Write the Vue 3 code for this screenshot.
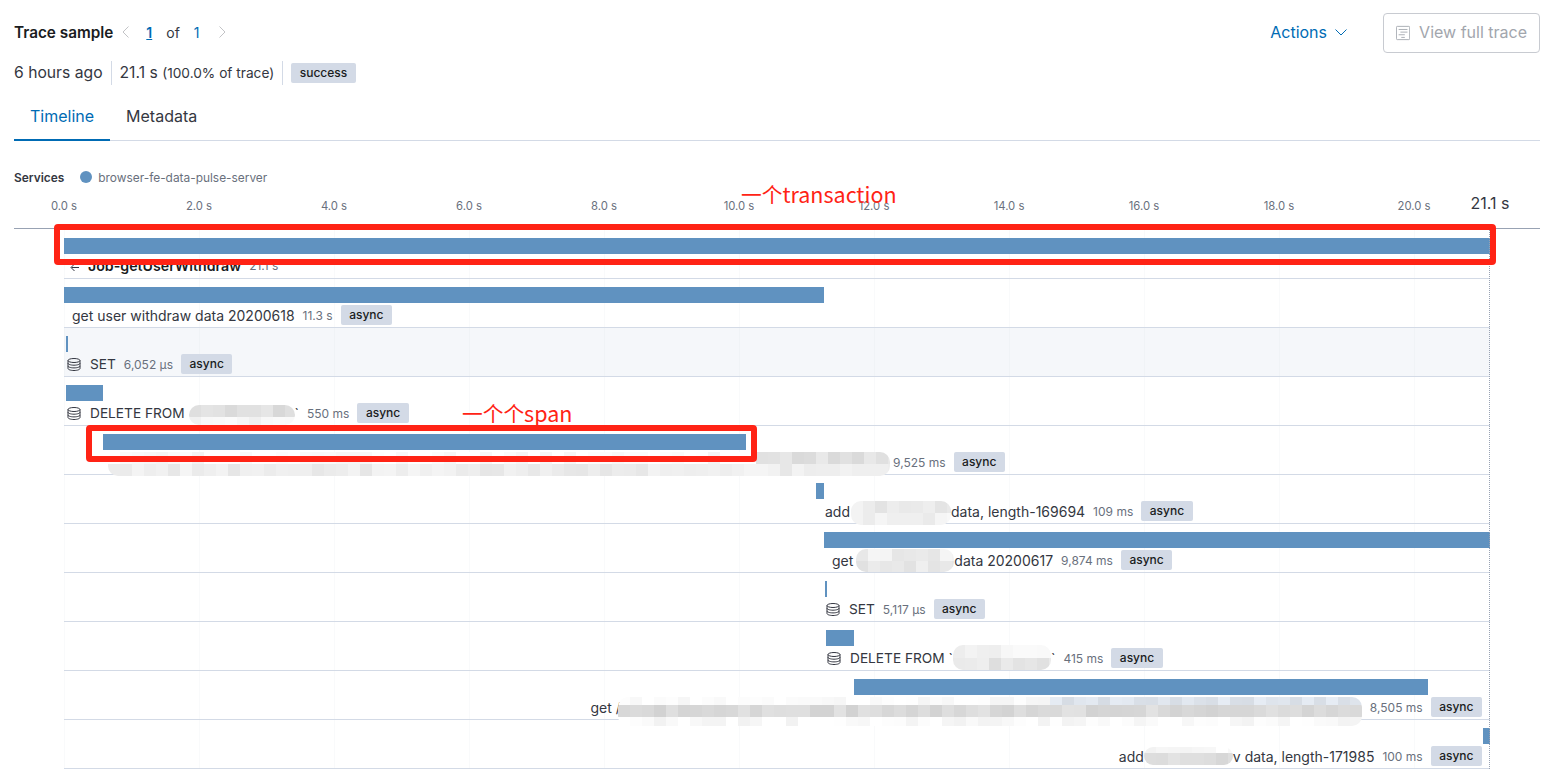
<script setup>
const ticks = [0, 2, 4, 6, 8, 10, 12, 14, 16, 18, 20]

// start/len are in px of the 1426px wide chart, turned into percent below
const rows = [
  { root: true, start: 0, len: 1426, at: 6, parts: [{ text: 'Job-getUserWithdraw' }], dur: '21.1 s' },
  { start: 0, len: 760, at: 8, parts: [{ text: 'get user withdraw data 20200618' }], dur: '11.3 s', tag: 'async' },
  { start: 2, len: 2, at: 3, db: true, hover: true, parts: [{ text: 'SET' }], dur: '6,052 μs', tag: 'async' },
  {
    start: 2, len: 37, at: 3, db: true,
    parts: [
      { text: 'DELETE FROM ' },
      { top: 2, w: 106, rows: [{ h: 12, c: 222 }, { h: 8, c: 248 }] },
      { text: '`' }
    ],
    dur: '550 ms', tag: 'async'
  },
  {
    start: 39, len: 643, at: 44,
    parts: [{ top: 0, w: 782, after: -5, rows: [{ h: 12, c: 251, from: 54, alt: 226 }, { h: 12, c: 238 }] }],
    dur: '9,525 ms', tag: 'async'
  },
  {
    start: 752, len: 8, at: 761,
    parts: [
      { text: 'add' },
      { top: 0, w: 100, gap: 1, rows: [{ h: 12, c: 235 }, { h: 12, c: 241 }] },
      { text: 'data, length-169694' }
    ],
    dur: '109 ms', tag: 'async'
  },
  {
    start: 760, len: 666, at: 768,
    parts: [
      { text: 'get' },
      { top: -1, w: 98, gap: 3, rows: [{ h: 12, c: 238 }, { h: 11, c: 232 }] },
      { text: 'data 20200617' }
    ],
    dur: '9,874 ms', tag: 'async'
  },
  { start: 761, len: 2, at: 762, db: true, parts: [{ text: 'SET' }], dur: '5,117 μs', tag: 'async' },
  {
    start: 762, len: 28, at: 763, db: true,
    parts: [
      { text: 'DELETE FROM `' },
      { top: -3, w: 98, rows: [{ h: 13, c: 244 }, { h: 12, c: 230 }] },
      { text: '`' }
    ],
    dur: '415 ms', tag: 'async'
  },
  {
    start: 790, len: 574, right: true,
    parts: [
      { text: 'get /' },
      { top: 0, w: 744, gap: -3, rows: [{ h: 8, c: 253, from: 36, alt: 222, blue: true }, { h: 12, c: 218 }, { h: 9, c: 250 }] }
    ],
    dur: '8,505 ms', tag: 'async'
  },
  {
    start: 1419, len: 7, right: true,
    parts: [
      { text: 'add' },
      { top: 1, w: 89, rows: [{ h: 6, c: 250 }, { h: 12, c: 223 }] },
      { text: 'v data, length-171985' }
    ],
    dur: '100 ms', tag: 'async'
  }
]

const pct = (px) => `${(px / 1426) * 100}%`

// fake the pixelated redaction blocks, seeded so each run looks the same
let seed = 7
const jitter = () => {
  seed = (seed * 16807) % 2147483647
  return (seed % 17) - 8
}

const cellColor = (band, col) => {
  const useAlt = band.from !== undefined && col >= band.from
  const base = useAlt ? band.alt : band.c
  const v = Math.min(255, base + jitter())
  if (useAlt && band.blue) return `rgb(${v}, ${v + 6}, ${v + 14})`
  return `rgb(${v}, ${v}, ${v})`
}

const cells = (part) =>
  part.rows.map((band) => ({
    h: band.h,
    colors: Array.from({ length: Math.ceil(part.w / 12) }, (_, col) => cellColor(band, col))
  }))

const mosaics = new Map()
rows.forEach((row) => {
  row.parts.forEach((part) => {
    if (part.rows) mosaics.set(part, cells(part))
  })
})
</script>

<template>
  <div class="page">
    <div class="head">
      <div class="head-left">
        <h5 class="title">Trace sample</h5>
        <svg class="pager-arrow" width="16" height="16" viewBox="0 0 16 16">
          <path d="M10.500 2.500 5 8l5.500 5.500" fill="none" stroke="#c2c3c6" stroke-width="1" />
        </svg>
        <a class="page-current">1</a>
        <span class="page-of">of</span>
        <a class="page-total">1</a>
        <svg class="pager-arrow next" width="16" height="16" viewBox="0 0 16 16">
          <path d="M5.500 2.500 11 8l-5.500 5.500" fill="none" stroke="#c2c3c6" stroke-width="1" />
        </svg>
      </div>
      <div class="head-right">
        <a class="actions">
          Actions
          <svg width="16" height="16" viewBox="0 0 16 16">
            <path d="M2.500 5.500 8 11l5.500-5.500" fill="none" stroke="#006bb4" stroke-width="1" />
          </svg>
        </a>
        <button class="full-trace" disabled>
          <svg width="16" height="16" viewBox="0 0 16 16" fill="none" stroke="#a2a6ad" stroke-width="1">
            <rect x="0.5" y="0.5" width="15" height="15" rx="1" />
            <path d="M3 4h10M5 7h8M3 10h7M6 13h4" />
          </svg>
          <span>View full trace</span>
        </button>
      </div>
    </div>

    <div class="summary">
      <span class="summary-item">6 hours ago</span>
      <span class="summary-item">21.1 s <small>(100.0% of trace)</small></span>
      <span class="badge success">success</span>
    </div>

    <div class="tabs">
      <div class="tab active">Timeline</div>
      <div class="tab">Metadata</div>
    </div>

    <div class="services">
      <b>Services</b>
      <i class="dot"></i>
      <span>browser-fe-data-pulse-server</span>
    </div>

    <div class="timeline">
      <div class="axis">
        <div class="axis-inner">
          <span v-for="t in ticks" :key="t" class="tick" :style="{ left: pct(t * 67.5) }">{{ t.toFixed(1) }} s</span>
          <span class="tick-end">21.1 s</span>
        </div>
      </div>

      <div class="rows">
        <i v-for="t in ticks" :key="t" class="grid-line" :style="{ left: pct(t * 67.5) }"></i>

        <div
          v-for="(row, i) in rows"
          :key="i"
          class="row"
          :class="{ hover: row.hover, first: row.root }"
        >
          <div class="bar" :style="{ marginLeft: pct(row.start), width: pct(row.len) }"></div>
          <div
            class="label"
            :class="{ right: row.right, root: row.root, 'has-db': row.db }"
            :style="row.right ? null : { paddingLeft: row.at + 'px' }"
          >
            <svg v-if="row.root" class="back" width="10" height="9" viewBox="0 0 10 9">
              <path d="M9 4.500H1.500M4.500 1 1 4.500 4.500 8" fill="none" stroke="#343741" stroke-width="1" />
            </svg>
            <svg v-if="row.db" class="db" width="14" height="13" viewBox="0 0 14 13" fill="none" stroke="#343741" stroke-width="1">
              <ellipse cx="7" cy="2.500" rx="6" ry="2" />
              <path d="M1 2.500v8c0 1.100 2.700 2 6 2s6-.9 6-2v-8M1 5.200c0 1.100 2.700 2 6 2s6-.9 6-2M1 7.900c0 1.100 2.700 2 6 2s6-.9 6-2" />
            </svg>
            <template v-for="(part, j) in row.parts" :key="j">
              <span v-if="part.text" class="name">{{ part.text }}</span>
              <div
                v-else
                class="mosaic"
                :style="{
                  width: part.w + 'px',
                  marginTop: part.top + 'px',
                  marginLeft: (part.gap || 0) + 'px',
                  marginRight: (part.after || 0) + 'px'
                }"
              >
                <div v-for="(band, k) in mosaics.get(part)" :key="k" class="mosaic-row" :style="{ height: band.h + 'px' }">
                  <i v-for="(color, c) in band.colors" :key="c" :style="{ background: color }"></i>
                </div>
              </div>
            </template>
            <span class="dur">{{ row.dur }}</span>
            <span v-if="row.tag" class="badge">{{ row.tag }}</span>
          </div>
        </div>

        <i class="end-line"></i>
      </div>

      <!-- red notes someone drew on top of the screenshot -->
      <div class="mark mark-root"></div>
      <div class="mark mark-span"></div>
      <span class="note note-root"><small>一个</small>transaction</span>
      <span class="note note-span"><small>一个个</small>span</span>
    </div>
  </div>
</template>

<style>
html,
body {
  margin: 0;
  background: #fff;
}
</style>

<style scoped>
.page {
  height: 783px;
  box-sizing: border-box;
  padding: 13px 11px 0 14px;
  overflow: hidden;
  font-family: Inter, "Noto Sans", sans-serif;
  color: #343741;
  position: relative;
}

.head {
  display: flex;
  justify-content: space-between;
  align-items: center;
  height: 40px;
}

.head-left,
.head-right {
  display: flex;
  align-items: center;
}

.head-left {
  padding-bottom: 2px;
}

.title {
  margin: 0;
  font-size: 15.3px;
  font-weight: 600;
  color: #1a1c21;
}

.pager-arrow {
  margin-left: 5px;
}

.pager-arrow.next {
  margin-left: 14px;
}

.page-current {
  margin-left: 12px;
  font-size: 14px;
  font-weight: 600;
  color: #006bb4;
  text-decoration: underline;
}

.page-of {
  margin-left: 14px;
  font-size: 14px;
  color: #343741;
}

.page-total {
  margin-left: 14px;
  font-size: 14px;
  color: #006bb4;
}

.actions {
  display: flex;
  align-items: center;
  gap: 6px;
  margin-right: 34px;
  padding-bottom: 2px;
  font-size: 16px;
  color: #006bb4;
}

.full-trace {
  display: flex;
  align-items: center;
  gap: 9px;
  width: 157px;
  height: 40px;
  padding: 0 12px;
  box-sizing: border-box;
  background: #fff;
  border: 1px solid #c8cbd1;
  border-radius: 4px;
  font-family: inherit;
  font-size: 16px;
  color: #a2a6ad;
  white-space: nowrap;
}

.full-trace span {
  margin-top: -2px;
}

.summary {
  display: flex;
  align-items: center;
  height: 24px;
  margin-top: 8px;
  font-size: 15.7px;
}

.summary-item {
  padding-right: 8px;
  margin-right: 8px;
  border-right: 1px solid #d3dae6;
  line-height: 24px;
}

.summary-item small {
  font-size: 13.7px;
}

.badge {
  display: inline-block;
  height: 20px;
  margin-left: 8px;
  padding: 0 8.5px;
  background: #d3dae6;
  border-radius: 2px;
  font-size: 12px;
  font-weight: 500;
  line-height: 20px;
  color: #1a1c21;
  white-space: nowrap;
}

.badge.success {
  margin-left: 0;
}

.tabs {
  display: flex;
  margin-top: 8px;
  height: 47px;
  box-sizing: content-box;
  border-bottom: 1px solid #d3dae6;
}

.tab {
  padding: 0 16px;
  margin-bottom: -1px;
  font-size: 16px;
  line-height: 47px;
  color: #343741;
}

.tab.active {
  color: #006bb4;
  box-shadow: inset 0 -2px 0 #006bb4;
}

.services {
  display: flex;
  align-items: center;
  height: 16px;
  margin-top: 28px;
  font-size: 11.9px;
  color: #69707d;
}

.services b {
  font-weight: 600;
  color: #343741;
}

.dot {
  width: 12px;
  height: 12px;
  margin: 0 6px 0 16px;
  border-radius: 50%;
  background: #6092c0;
}

.timeline {
  position: relative;
}

.axis {
  height: 43px;
  padding: 0 50px;
  border-bottom: 1px solid #98a2b3;
}

.axis-inner {
  position: relative;
  height: 100%;
}

.tick,
.tick-end {
  position: absolute;
  top: 13px;
  transform: translateX(-50%);
  font-size: 11.3px;
  line-height: 16px;
  color: #69707d;
  white-space: nowrap;
}

.tick-end {
  left: 100%;
  top: 10px;
  font-size: 16px;
  color: #343741;
}

.rows {
  position: relative;
  margin: 0 50px;
}

.grid-line {
  position: absolute;
  top: 0;
  bottom: 0;
  width: 1px;
  background: rgba(211, 218, 230, 0.14);
}

.end-line {
  position: absolute;
  top: 0;
  bottom: 0;
  right: 0;
  border-right: 1px dotted #98a2b3;
}

.row {
  box-sizing: border-box;
  height: 49px;
  padding-top: 8px;
  border-bottom: 1px solid #d3dae6;
}

.row.first {
  height: 50px;
  padding-top: 9px;
}

.row.first .label {
  margin-top: 1px;
}

.row.hover {
  background: #f5f7fa;
}

.bar {
  position: relative;
  height: 16px;
  background: #6092c0;
}

.label {
  position: relative;
  display: flex;
  align-items: center;
  height: 20px;
  margin-top: 2px;
  box-sizing: border-box;
}

.label.right {
  justify-content: flex-end;
  padding-right: 8px;
}

.back {
  margin: 5px 8px 0 0;
}

.db {
  margin-right: 9px;
}

.name {
  font-size: 14px;
  color: #343741;
  white-space: pre;
}

.label.has-db .name {
  font-size: 13.7px;
}

.label.root .name {
  font-size: 14.2px;
  font-weight: 600;
  color: #1a1c21;
}

.dur {
  margin-left: 8px;
  font-size: 12px;
  color: #69707d;
  white-space: nowrap;
}

.mosaic {
  flex: none;
  align-self: flex-start;
  border-radius: 10px;
  overflow: hidden;
}

.mosaic-row {
  display: flex;
}

.mosaic-row i {
  flex: none;
  width: 12px;
}

.mark {
  position: absolute;
  box-sizing: border-box;
  border: 6px solid #ff2315;
  border-radius: 4px;
}

.mark-root {
  left: 40px;
  top: 39px;
  width: 1442px;
  height: 41px;
}

.mark-span {
  left: 72px;
  top: 240px;
  width: 671px;
  height: 37px;
}

.note {
  position: absolute;
  font-family: "Noto Sans CJK SC", "Noto Sans", sans-serif;
  font-size: 21.5px;
  line-height: 28px;
  color: #ff2315;
  white-space: nowrap;
}

.note small {
  font-size: 20.7px;
}

.note-root {
  left: 727px;
  top: -5px;
}

.note-span {
  left: 448px;
  top: 214px;
}
</style>
